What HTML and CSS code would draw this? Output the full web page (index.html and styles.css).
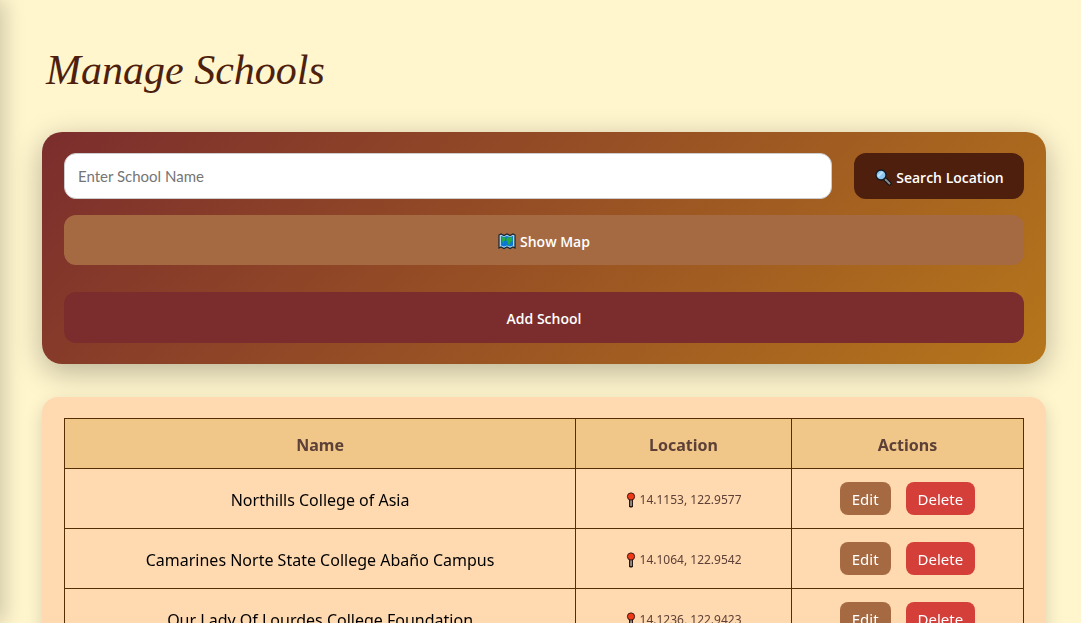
FILE: index.html
```html
<!DOCTYPE html>
<html lang="en">
<head>
<meta charset="utf-8">
<title>Manage Schools</title>
<meta name="viewport" content="width=device-width, initial-scale=1">
<link rel="stylesheet" href="styles.css">
</head>
<body>
<svg class="defs" aria-hidden="true">
  <symbol id="pin" viewBox="0 0 10 16">
    <path d="M3 7h4v7.500l-1 1H4l-1-1z" fill="#2b1a14"/>
    <path d="M4.300 7h1.500v7H4.300z" fill="#aaa6a2"/>
    <circle cx="5" cy="4.500" r="3.600" fill="#f03a17" stroke="#3a1710"/>
  </symbol>
</svg>
<aside class="sidebar" aria-hidden="true"></aside>
<main class="page">
  <h1 class="title">Manage Schools</h1>
  <form class="form-card">
    <div class="search-row">
      <input class="name-input" type="text" placeholder="Enter School Name" aria-label="School name">
      <button class="btn btn-search" type="button">
        <svg class="icon" viewBox="0 0 18 18" aria-hidden="true">
          <path d="M11.500 11.500l4 4" stroke="#111" stroke-width="4" stroke-linecap="round"/>
          <path d="M11.500 11.500l4 4" stroke="#85888c" stroke-width="2" stroke-linecap="round"/>
          <circle cx="7" cy="7" r="5" fill="#8cc7f2" stroke="#101a22" stroke-width="1.300"/>
          <path d="M3.500 7.500l4-4 2 1-5 5z" fill="#c0e2f8"/>
        </svg>
        Search Location
      </button>
    </div>
    <button class="btn btn-map" type="button">
      <svg class="icon" viewBox="0 0 18 18" aria-hidden="true">
        <path d="M1 3l2-1 3 1.500L9 2l3 1.500L15 2l2 1v13l-2-1-3 1.500L9 15l-3 1.500L3 15l-2 1z" fill="#a9d5f3" stroke="#17242d" stroke-width="1.200"/>
        <path d="M3 4l3 1 3-1 3 1 3-1v9.500l-3 1-3-1-3 1-3-1z" fill="#0878d4"/>
        <path d="M3.500 5l4 .5-.5 3-1.500 1v3L4 9zM9 5.500l5-.5.500 4-2 1-.5 3-2-.5-.5-3-1.500-1.500z" fill="#26a843"/>
      </svg>
      Show Map
    </button>
    <button class="btn btn-add" type="submit">Add School</button>
  </form>
  <section class="table-card">
    <table class="schools">
      <thead>
        <tr><th class="col-name" scope="col">Name</th><th class="col-location" scope="col">Location</th><th class="col-actions" scope="col">Actions</th></tr>
      </thead>
      <tbody>
        <tr>
          <td>Northills College of Asia</td>
          <td><span class="coords"><svg class="pin" aria-hidden="true"><use href="#pin"/></svg>14.1153, 122.9577</span></td>
          <td><div class="actions"><button class="action edit" type="button">Edit</button><button class="action delete" type="button">Delete</button></div></td>
        </tr>
        <tr>
          <td>Camarines Norte State College Abaño Campus</td>
          <td><span class="coords"><svg class="pin" aria-hidden="true"><use href="#pin"/></svg>14.1064, 122.9542</span></td>
          <td><div class="actions"><button class="action edit" type="button">Edit</button><button class="action delete" type="button">Delete</button></div></td>
        </tr>
        <tr>
          <td>Our Lady Of Lourdes College Foundation</td>
          <td><span class="coords"><svg class="pin" aria-hidden="true"><use href="#pin"/></svg>14.1236, 122.9423</span></td>
          <td><div class="actions"><button class="action edit" type="button">Edit</button><button class="action delete" type="button">Delete</button></div></td>
        </tr>
      </tbody>
    </table>
  </section>
</main>
</body>
</html>
```
FILE: styles.css
```css
* { box-sizing: border-box; }

html {
  overflow-x: hidden;
  scrollbar-width: none;
}

body {
  margin: 0;
  background: #fff6ce;
  font-family: "Noto Sans", "Open Sans", sans-serif;
  font-size: 16px;
  color: #000;
}

.defs { display: none; }

.sidebar {
  position: fixed;
  top: 0;
  bottom: 0;
  left: -250px;
  width: 250px;
  box-shadow: 4px 0 20px rgba(0, 0, 0, 0.2);
}

.page { padding: 32px 35px 32px 42px; }

.title {
  margin: 0 0 28px;
  padding: 4px 0 0 4px;
  font-family: "Tangerine", "Liberation Serif", serif;
  font-family: "Liberation Serif", serif;
  font-size: 42px;
  font-style: italic;
  font-weight: 400;
  line-height: 68px;
  color: #4e1f0d;
}

.form-card {
  display: flex;
  flex-direction: column;
  padding: 21px 22px;
  border-radius: 20px;
  background: linear-gradient(135deg, #7b2d2d, #b5761b);
  box-shadow: 0 8px 30px rgba(0, 0, 0, 0.28);
}

.search-row {
  display: flex;
  gap: 22px;
  margin-bottom: 16px;
}

.name-input {
  flex: 1;
  min-width: 0;
  height: 46px;
  padding: 0 13px;
  border: 1px solid #ccc;
  border-radius: 12px;
  background: #fff;
  font-family: Lato, sans-serif;
  font-size: 15px;
}

.name-input::placeholder { color: #757575; }

.btn {
  display: flex;
  align-items: center;
  justify-content: center;
  gap: 4px;
  padding: 2px 16px 0;
  border: 0;
  border-radius: 12px;
  font-family: "Open Sans", "Noto Sans", sans-serif;
  font-size: 14px;
  font-weight: 600;
  color: #fff;
}

.btn-search {
  width: 170px;
  height: 46px;
  background: #4e1f0d;
  white-space: nowrap;
}

.btn-map {
  height: 50px;
  margin-bottom: 27px;
  background: #a66a43;
}

.btn-add {
  height: 51px;
  background: #7b2d2d;
}

.icon {
  flex: none;
  width: 18px;
  height: 18px;
  fill: none;
}

.table-card {
  position: relative;
  margin-top: 33px;
  padding: 21px 22px;
  border-radius: 16px;
  background: #ffd9b0;
  box-shadow: 0 6px 18px rgba(0, 0, 0, 0.15);
}

.schools {
  width: 100%;
  table-layout: fixed;
  border-collapse: collapse;
  text-align: center;
}

.schools th,
.schools td {
  height: 60px;
  padding: 2px 12px 0;
  border: 1px solid #562e04;
}

.schools td:last-child { padding-top: 0; }

.schools th {
  height: 50px;
  padding-top: 3px;
  background: #f0c788;
  color: #5d4037;
  font-weight: 700;
}

.col-name { width: 53.3%; }
.col-location { width: 22.5%; }
.col-actions { width: 24.2%; }

.coords {
  display: flex;
  align-items: center;
  justify-content: center;
  gap: 4px;
  font-size: 12px;
  color: #5d4037;
}

.pin {
  width: 10px;
  height: 16px;
}

.actions {
  display: flex;
  justify-content: center;
  gap: 15px;
}

.action {
  height: 33px;
  padding: 0 12px;
  border: 0;
  border-radius: 8px;
  font-family: inherit;
  font-size: 15px;
  color: #fff;
}

.edit { background: #a66a43; }
.delete { background: #d43f3a; }
```
